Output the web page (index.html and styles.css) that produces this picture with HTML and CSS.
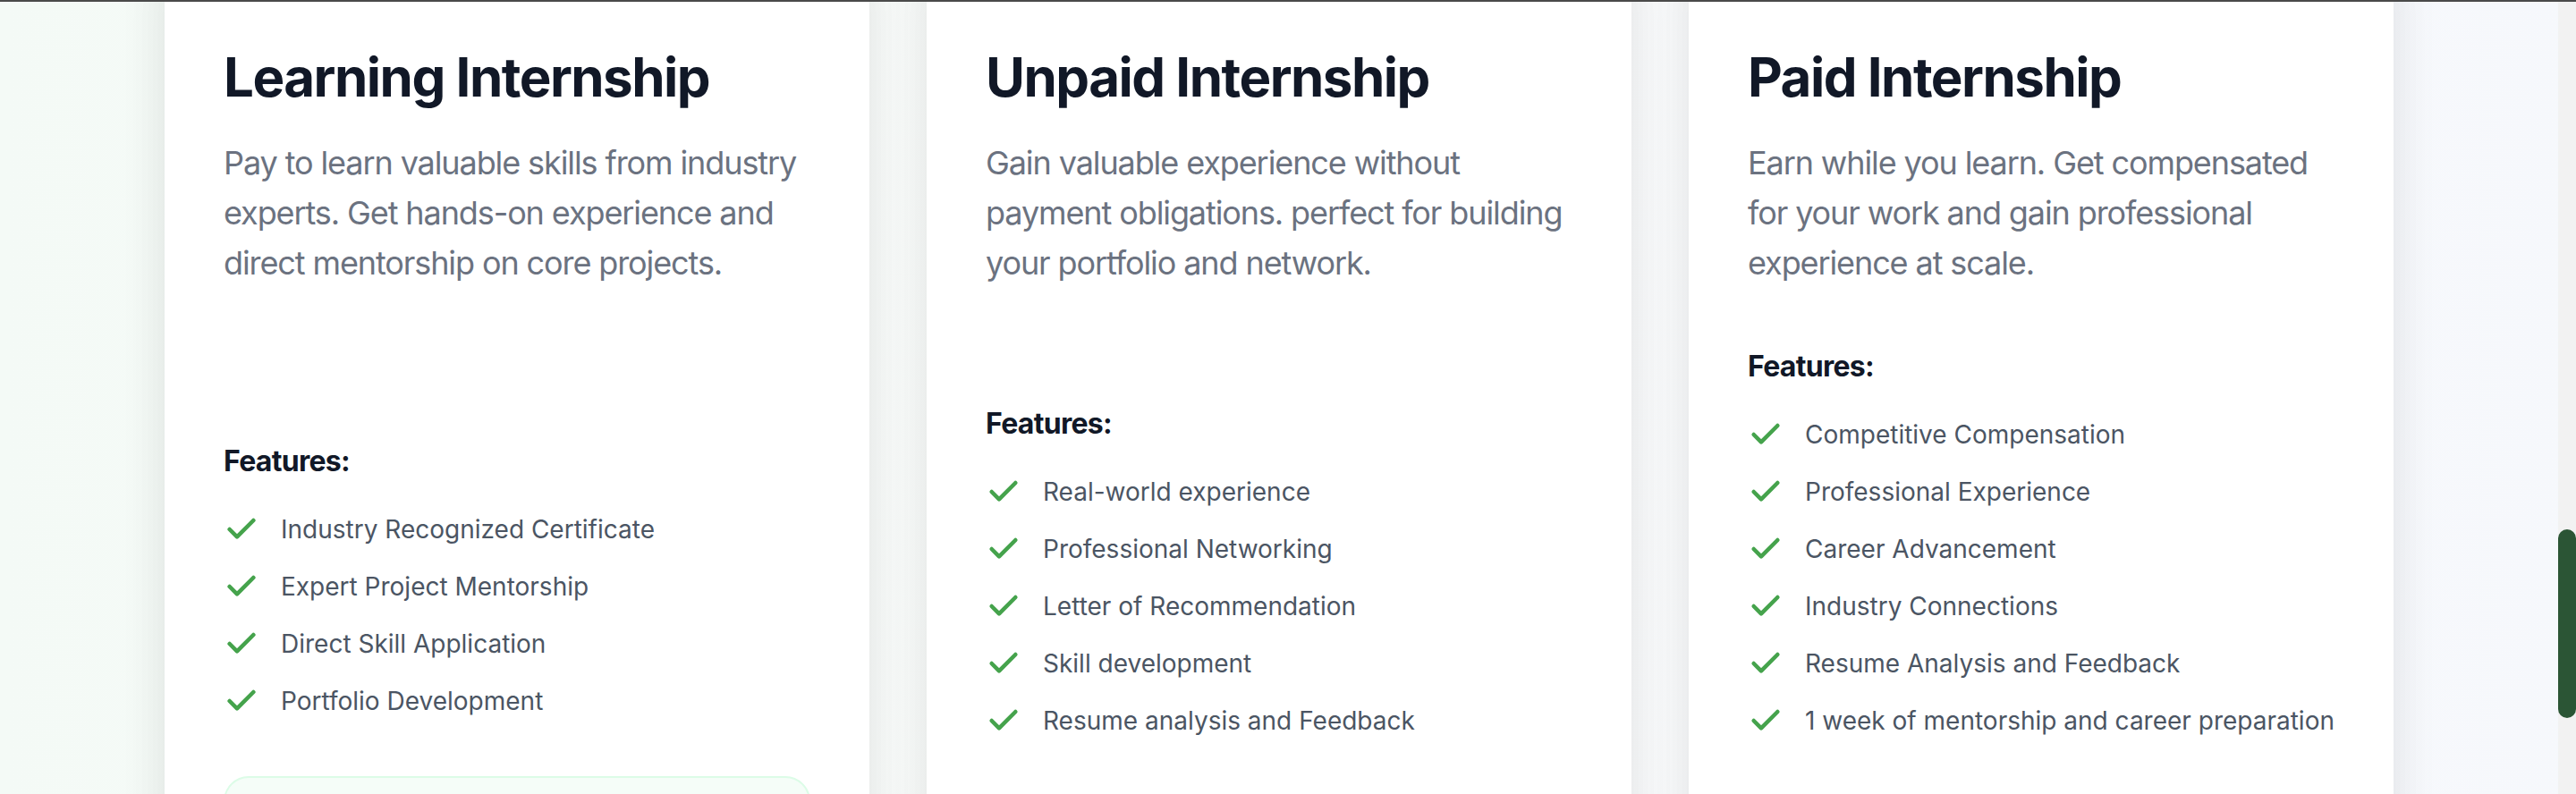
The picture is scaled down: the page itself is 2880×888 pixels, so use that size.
FILE: index.html
```html
<!DOCTYPE html>
<html lang="en">
<head>
<meta charset="utf-8">
<title>Internship Plans</title>
<link rel="stylesheet" href="styles.css">
</head>
<body>
<div class="topline"></div>
<main class="page">
  <section class="plans">
    <article class="card card--learning">
      <h2 class="card-title">Learning Internship</h2>
      <p class="card-desc">Pay to learn valuable skills from industry experts. Get hands-on experience and direct mentorship on core projects.</p>
      <div class="features">
        <h3 class="features-title">Features:</h3>
        <ul class="feature-list">
          <li class="feature"><svg class="check" viewBox="0 0 24 24"><path d="M20 6 9 17l-5-5"/></svg><span>Industry Recognized Certificate</span></li>
          <li class="feature"><svg class="check" viewBox="0 0 24 24"><path d="M20 6 9 17l-5-5"/></svg><span>Expert Project Mentorship</span></li>
          <li class="feature"><svg class="check" viewBox="0 0 24 24"><path d="M20 6 9 17l-5-5"/></svg><span>Direct Skill Application</span></li>
          <li class="feature"><svg class="check" viewBox="0 0 24 24"><path d="M20 6 9 17l-5-5"/></svg><span>Portfolio Development</span></li>
        </ul>
      </div>
      <div class="card-note"></div>
    </article>
    <article class="card card--unpaid">
      <h2 class="card-title">Unpaid Internship</h2>
      <p class="card-desc">Gain valuable experience without payment obligations. perfect for building your portfolio and network.</p>
      <div class="features">
        <h3 class="features-title">Features:</h3>
        <ul class="feature-list">
          <li class="feature"><svg class="check" viewBox="0 0 24 24"><path d="M20 6 9 17l-5-5"/></svg><span>Real-world experience</span></li>
          <li class="feature"><svg class="check" viewBox="0 0 24 24"><path d="M20 6 9 17l-5-5"/></svg><span>Professional Networking</span></li>
          <li class="feature"><svg class="check" viewBox="0 0 24 24"><path d="M20 6 9 17l-5-5"/></svg><span>Letter of Recommendation</span></li>
          <li class="feature"><svg class="check" viewBox="0 0 24 24"><path d="M20 6 9 17l-5-5"/></svg><span>Skill development</span></li>
          <li class="feature"><svg class="check" viewBox="0 0 24 24"><path d="M20 6 9 17l-5-5"/></svg><span>Resume analysis and Feedback</span></li>
        </ul>
      </div>
      <div class="card-note"></div>
    </article>
    <article class="card card--paid">
      <h2 class="card-title">Paid Internship</h2>
      <p class="card-desc">Earn while you learn. Get compensated for your work and gain professional experience at scale.</p>
      <div class="features">
        <h3 class="features-title">Features:</h3>
        <ul class="feature-list">
          <li class="feature"><svg class="check" viewBox="0 0 24 24"><path d="M20 6 9 17l-5-5"/></svg><span>Competitive Compensation</span></li>
          <li class="feature"><svg class="check" viewBox="0 0 24 24"><path d="M20 6 9 17l-5-5"/></svg><span>Professional Experience</span></li>
          <li class="feature"><svg class="check" viewBox="0 0 24 24"><path d="M20 6 9 17l-5-5"/></svg><span>Career Advancement</span></li>
          <li class="feature"><svg class="check" viewBox="0 0 24 24"><path d="M20 6 9 17l-5-5"/></svg><span>Industry Connections</span></li>
          <li class="feature"><svg class="check" viewBox="0 0 24 24"><path d="M20 6 9 17l-5-5"/></svg><span>Resume Analysis and Feedback</span></li>
          <li class="feature"><svg class="check" viewBox="0 0 24 24"><path d="M20 6 9 17l-5-5"/></svg><span>1 week of mentorship and career preparation</span></li>
        </ul>
      </div>
      <div class="card-note"></div>
    </article>
  </section>
</main>
<div class="scrollbar"><div class="scrollbar-thumb"></div></div>
</body>
</html>
```
FILE: styles.css
```css
html, body {
  margin: 0;
  height: 888px;
  overflow: hidden;
}

body {
  font-family: Inter, "Noto Sans", "Liberation Sans", sans-serif;
  background: linear-gradient(90deg, #f4faf6 0%, #fafbfb 50%, #f6f8fc 100%);
  -webkit-font-smoothing: antialiased;
}

.topline {
  position: fixed;
  top: 0;
  left: 0;
  right: 0;
  height: 2px;
  background: #4a4a4a;
  z-index: 5;
}

.plans {
  display: grid;
  grid-template-columns: repeat(3, 1fr);
  gap: 64px;
  padding: 0 204px 0 184px;
}

.card {
  display: flex;
  flex-direction: column;
  margin-top: -64px;
  padding: 114px 66px 64px;
  background: #ffffff;
  border-radius: 32px;
  box-shadow: 0 0 60px rgba(15, 23, 42, 0.06), 0 24px 50px rgba(15, 23, 42, 0.05);
}

.card-title {
  margin: 0 0 32px;
  font-size: 60px;
  line-height: 72px;
  font-weight: 700;
  color: #111827;
  letter-spacing: -1.5px;
}

.card-desc {
  margin: 0;
  font-size: 36px;
  line-height: 56px;
  color: #6b7280;
  letter-spacing: -1.1px;
}

.features {
  margin-top: 64px;
}

.card--learning .features { margin-top: 170px; }
.card--unpaid .features { margin-top: 128px; }
.card--paid .features { margin-top: 64px; }

.features-title {
  margin: 0 0 32px;
  font-size: 32px;
  line-height: 48px;
  font-weight: 700;
  color: #111827;
  letter-spacing: -0.7px;
}

.feature-list {
  list-style: none;
  margin: 0;
  padding: 0;
  display: flex;
  flex-direction: column;
  gap: 24px;
}

.feature {
  display: flex;
  align-items: flex-start;
  gap: 24px;
  font-size: 28px;
  line-height: 40px;
  color: #4b5563;
}

.check {
  flex: none;
  width: 40px;
  height: 40px;
  fill: none;
  stroke: #45a34c;
  stroke-width: 2.75;
  stroke-linecap: round;
  stroke-linejoin: round;
}

.card-note {
  margin-top: 64px;
  height: 220px;
  border: 2px solid #dcfce7;
  background: #f5fdf8;
  border-radius: 28px;
}

.scrollbar {
  position: fixed;
  top: 0;
  right: 0;
  width: 20px;
  height: 888px;
  background: #f2f2f2;
  z-index: 4;
}

.scrollbar-thumb {
  margin-top: 592px;
  height: 211px;
  border-radius: 10px;
  background: #2b5535;
}
```
